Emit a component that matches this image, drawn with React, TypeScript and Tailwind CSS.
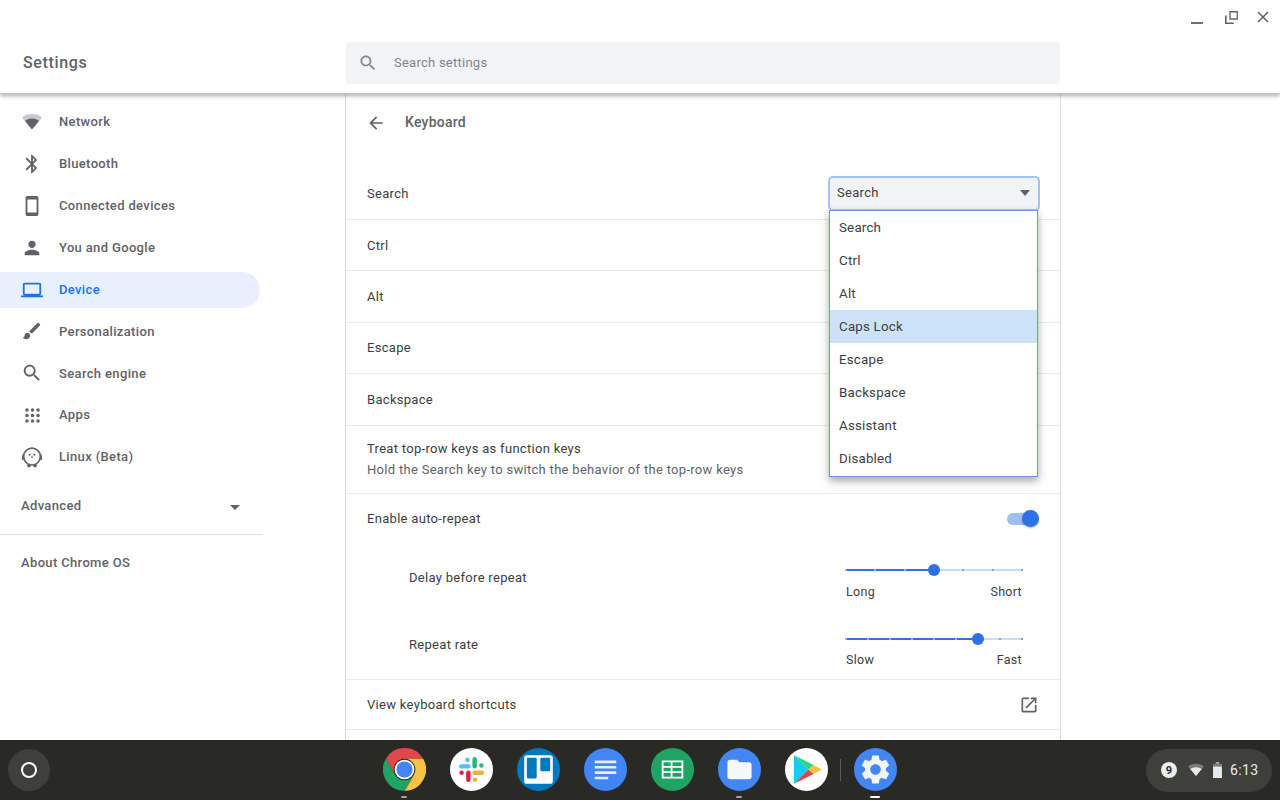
import type { ReactNode } from "react";

const ICON_PATHS = {
  bluetooth:
    "M17.71 7.71L12 2h-1v7.59L6.41 5 5 6.41 10.59 12 5 17.59 6.41 19 11 14.41V22h1l5.71-5.71-4.3-4.29 4.3-4.29zM13 5.83l1.88 1.88L13 9.59V5.83zm1.88 10.46L13 18.17v-3.76l1.88 1.88z",
  phone:
    "M17 1.01L7 1c-1.1 0-2 .9-2 2v18c0 1.1.9 2 2 2h10c1.1 0 2-.9 2-2V3c0-1.1-.9-1.99-2-1.99zM17 19H7V5h10v14z",
  person:
    "M12 12c2.21 0 4-1.79 4-4s-1.79-4-4-4-4 1.79-4 4 1.79 4 4 4zm0 2c-2.67 0-8 1.34-8 4v2h16v-2c0-2.66-5.33-4-8-4z",
  laptop:
    "M20 18c1.1 0 1.99-.9 1.99-2L22 6c0-1.1-.9-2-2-2H4c-1.1 0-2 .9-2 2v10c0 1.1.9 2 2 2H0v2h24v-2h-4zM4 6h16v10H4V6z",
  brush:
    "M7 14c-1.66 0-3 1.34-3 3 0 1.31-1.16 2-2 2 .92 1.22 2.49 2 4 2 2.21 0 4-1.79 4-4 0-1.66-1.34-3-3-3zm13.71-9.37l-1.34-1.34c-.39-.39-1.02-.39-1.41 0L9 12.25 11.75 15l8.96-8.96c.39-.39.39-1.02 0-1.41z",
  search:
    "M15.5 14h-.79l-.28-.27C15.41 12.59 16 11.11 16 9.5 16 5.91 13.09 3 9.5 3S3 5.91 3 9.5 5.91 16 9.5 16c1.61 0 3.09-.59 4.23-1.57l.27.28v.79l5 4.99L20.49 19l-4.99-5zm-6 0C7.01 14 5 11.99 5 9.5S7.01 5 9.5 5 14 7.01 14 9.5 11.99 14 9.5 14z",
  openNew:
    "M19 19H5V5h7V3H5c-1.11 0-2 .9-2 2v14c0 1.1.89 2 2 2h14c1.1 0 2-.9 2-2v-7h-2v7zM14 3v2h3.59l-9.83 9.83 1.41 1.41L19 6.41V10h2V3h-7z",
  back: "M20 11H7.83l5.59-5.59L12 4l-8 8 8 8 1.41-1.41L7.83 13H20v-2z",
  folder:
    "M10 4H4c-1.1 0-1.99.9-1.99 2L2 18c0 1.1.9 2 2 2h16c1.1 0 2-.9 2-2V8c0-1.1-.9-2-2-2h-8l-2-2z",
  gear: "M19.14 12.94c.04-.3.06-.61.06-.94 0-.32-.02-.64-.07-.94l2.03-1.58c.18-.14.23-.41.12-.61l-1.92-3.32c-.12-.22-.37-.29-.59-.22l-2.39.96c-.5-.38-1.03-.7-1.62-.94l-.36-2.54c-.04-.24-.24-.41-.48-.41h-3.84c-.24 0-.43.17-.47.41l-.36 2.54c-.59.24-1.13.57-1.62.94l-2.39-.96c-.22-.08-.47 0-.59.22L2.74 8.87c-.12.21-.08.47.12.61l2.03 1.58c-.05.3-.09.63-.09.94s.02.64.07.94l-2.03 1.58c-.18.14-.23.41-.12.61l1.92 3.32c.12.22.37.29.59.22l2.39-.96c.5.38 1.03.7 1.62.94l.36 2.54c.05.24.24.41.48.41h3.84c.24 0 .44-.17.47-.41l.36-2.54c.59-.24 1.13-.56 1.62-.94l2.39.96c.22.08.47 0 .59-.22l1.92-3.32c.12-.22.07-.47-.12-.61l-2.01-1.58zM12 15.6c-1.98 0-3.6-1.62-3.6-3.6s1.62-3.6 3.6-3.6 3.6 1.62 3.6 3.6-1.62 3.6-3.6 3.6z",
};

function Icon({ d, className }: { d: string; className?: string }) {
  return (
    <svg viewBox="0 0 24 24" fill="currentColor" className={className}>
      <path d={d} />
    </svg>
  );
}

function WifiIcon({ className }: { className?: string }) {
  return (
    <svg viewBox="0 0 24 24" fill="currentColor" className={className}>
      <path opacity="0.35" d="M12 21L24 6.5C23.5 6.1 18.9 2.5 12 2.5S.5 6.1 0 6.5z" />
      <path d="M12 21L20.6 10.6C19.6 9.8 16.4 7.8 12 7.8S4.4 9.8 3.4 10.6z" />
    </svg>
  );
}

function AppsIcon({ className }: { className?: string }) {
  return (
    <svg viewBox="0 0 24 24" fill="currentColor" className={className}>
      {[5, 12, 19].map((y) =>
        [5, 12, 19].map((x) => <circle key={`${x}-${y}`} cx={x} cy={y} r="2.2" />)
      )}
    </svg>
  );
}

function PenguinIcon({ className }: { className?: string }) {
  return (
    <svg viewBox="0 0 24 24" className={className}>
      <circle cx="12" cy="11.5" r="9.2" fill="none" stroke="currentColor" strokeWidth="1.8" />
      <path
        fill="currentColor"
        d="M3.5 7.5C1.2 9 .5 12 1 15c.8.4 1.8 0 2.5-.6zM20.5 7.5c2.3 1.5 3 4.5 2.5 7.5-.8.4-1.8 0-2.5-.6zM6 20.5h4.5v2.6H7.5zM13.5 20.5H18l-1.5 2.6h-3z"
      />
      <circle cx="9.3" cy="9.5" r="1.1" fill="currentColor" />
      <circle cx="14.7" cy="9.5" r="1.1" fill="currentColor" />
      <path fill="currentColor" d="M10.5 11.5h3L12 13.6z" />
    </svg>
  );
}

const navItems: { label: string; icon: ReactNode; active?: boolean }[] = [
  { label: "Network", icon: <WifiIcon className="w-[20px] h-[20px]" /> },
  { label: "Bluetooth", icon: <Icon d={ICON_PATHS.bluetooth} className="w-[22px] h-[22px]" /> },
  { label: "Connected devices", icon: <Icon d={ICON_PATHS.phone} className="w-[22px] h-[22px]" /> },
  { label: "You and Google", icon: <Icon d={ICON_PATHS.person} className="w-[22px] h-[22px]" /> },
  { label: "Device", icon: <Icon d={ICON_PATHS.laptop} className="w-[22px] h-[22px]" />, active: true },
  { label: "Personalization", icon: <Icon d={ICON_PATHS.brush} className="w-[22px] h-[22px]" /> },
  { label: "Search engine", icon: <Icon d={ICON_PATHS.search} className="w-[22px] h-[22px]" /> },
  { label: "Apps", icon: <AppsIcon className="w-[19px] h-[19px]" /> },
  { label: "Linux (Beta)", icon: <PenguinIcon className="w-[22px] h-[22px]" /> },
];

const menuOptions = ["Search", "Ctrl", "Alt", "Caps Lock", "Escape", "Backspace", "Assistant", "Disabled"];

function Sidebar() {
  return (
    <aside className="w-[345px] shrink-0 pt-[10px] text-[#5f6368]">
      <nav className="flex flex-col gap-[5.875px] w-[260px]">
        {navItems.map((item) => (
          <div
            key={item.label}
            className={`h-9 flex items-center rounded-r-[18px] ${
              item.active ? "bg-[#e8f0fe] text-[#1a73e8]" : ""
            }`}
          >
            <div className="w-[59px] pl-[20px] pr-[15px] flex items-center justify-center shrink-0">
              {item.icon}
            </div>
            <span className="text-[13px] font-medium tracking-[0.35px]">{item.label}</span>
          </div>
        ))}
      </nav>
      <div className="w-[263px] mt-[3px] h-[57px] flex items-center justify-between pl-[21px] pr-[23px] border-b border-[#e3e4e6] pb-[1px]">
        <span className="text-[13px] font-medium tracking-[0.35px]">Advanced</span>
        <span className="w-0 h-0 border-x-[5px] border-x-transparent border-t-[5px] border-t-[#5f6368] mt-[3px]" />
      </div>
      <p className="pl-[21px] mt-[18px] text-[13px] font-medium tracking-[0.35px]">About Chrome OS</p>
    </aside>
  );
}

function Slider({
  percent,
  steps,
  min,
  max,
  labelGap,
}: {
  percent: number;
  steps: number;
  min: string;
  max: string;
  labelGap: string;
}) {
  const ticks = Array.from({ length: steps + 1 }, (_, i) => (i * 100) / steps);
  return (
    <div className="w-[176px]">
      <div className="relative h-[2px] bg-[#c6dcf7]">
        <div className="h-full bg-[#2b72e6]" style={{ width: `${percent}%` }} />
        {ticks.map((t) => (
          <span
            key={t}
            className={`absolute top-0 w-[2px] h-[2px] -ml-[1px] ${t < percent ? "bg-[#8fb6f0]" : "bg-[#74a6ee]"}`}
            style={{ left: `${t}%` }}
          />
        ))}
        <span
          className="absolute top-[-5px] w-3 h-3 -ml-[6px] rounded-full bg-[#2b72e6]"
          style={{ left: `${percent}%` }}
        />
      </div>
      <div className={`flex justify-between ${labelGap} text-[12.5px] leading-4 text-[#3c4043]`}>
        <span>{min}</span>
        <span>{max}</span>
      </div>
    </div>
  );
}

function Row({ label, height }: { label: string; height: string }) {
  return (
    <div className={`${height} flex items-center px-[21px] border-b border-[#ebebeb] text-[13px] tracking-[0.3px] text-[#3c4043]`}>
      {label}
    </div>
  );
}

function KeyboardCard() {
  return (
    <main className="w-[716px] shrink-0 border-x border-[#dcdcdc] text-[#3c4043]">
      <div className="h-[57px] flex items-center pl-[20px]">
        <Icon d={ICON_PATHS.back} className="w-5 h-5 text-[#5f6368]" />
        <h2 className="ml-[19px] text-[14px] font-medium tracking-[0.25px] text-[#5f6368]">Keyboard</h2>
      </div>
      <div className="h-[69px] pt-[16px] flex items-center justify-between pl-[21px] pr-[20px] border-b border-[#ebebeb] text-[13px] tracking-[0.3px]">
        <span className="pt-[1px]">Search</span>
        <div className="relative z-10">
          <div className="w-[212px] h-[35px] flex items-center justify-between rounded-[5px] border-2 border-[#a3c3f7] bg-[#f1f3f4] pl-[7px] pr-[8px]">
            <span>Search</span>
            <span className="w-0 h-0 border-x-[5px] border-x-transparent border-t-[6px] border-t-[#5f6368]" />
          </div>
          <ul className="absolute left-[1px] top-[34px] w-[209px] border border-[#6f97dc] bg-white pb-[1px] text-[13.33px] tracking-[0.2px] shadow-[0_4px_8px_rgba(0,0,0,0.35)]">
            {menuOptions.map((option) => (
              <li
                key={option}
                className={`h-[33px] flex items-center pl-[9px] pt-[2px] ${option === "Caps Lock" ? "bg-[#cce2f8]" : ""}`}
              >
                {option}
              </li>
            ))}
          </ul>
        </div>
      </div>
      <Row label="Ctrl" height="h-[51px] pt-[1px]" />
      <Row label="Alt" height="h-[52px]" />
      <Row label="Escape" height="h-[51px]" />
      <Row label="Backspace" height="h-[52px]" />
      <div className="h-[68px] flex flex-col justify-center px-[21px] pb-[2px] border-b border-[#ebebeb] text-[13px] tracking-[0.3px]">
        <p className="leading-[21px]">Treat top-row keys as function keys</p>
        <p className="leading-[21px] text-[#5f6368]">Hold the Search key to switch the behavior of the top-row keys</p>
      </div>
      <div className="h-[186px] border-b border-[#ebebeb] text-[13px] tracking-[0.3px]">
        <div className="h-[50px] flex items-center justify-between pl-[21px] pr-[21px]">
          <span>Enable auto-repeat</span>
          <div className="relative w-[32px] h-3 rounded-full bg-[#9dbff3]">
            <span className="absolute right-0 top-[-3px] w-[17px] h-[17px] rounded-full bg-[#2b72e6] shadow-[0_1px_2px_rgba(0,0,0,0.3)]" />
          </div>
        </div>
        <div className="h-[66px] pt-[19px] flex justify-between pl-[63px] pr-[38px]">
          <span className="mt-[5px]">Delay before repeat</span>
          <div className="pt-[6px]">
            <Slider percent={50} steps={6} min="Long" max="Short" labelGap="mt-[13px]" />
          </div>
        </div>
        <div className="h-[68px] pt-[20px] flex justify-between pl-[63px] pr-[38px]">
          <span className="mt-[5px]">Repeat rate</span>
          <div className="pt-[8px]">
            <Slider percent={75} steps={8} min="Slow" max="Fast" labelGap="mt-[12px]" />
          </div>
        </div>
      </div>
      <div className="h-[50px] flex items-center justify-between pl-[21px] pr-[21px] border-b border-[#ebebeb] text-[13px] tracking-[0.3px]">
        <span>View keyboard shortcuts</span>
        <Icon d={ICON_PATHS.openNew} className="w-5 h-5 text-[#5f6368]" />
      </div>
    </main>
  );
}

function ChromeLogo() {
  return (
    <svg viewBox="0 0 48 48" className="w-[43px] h-[43px]">
      <path fill="#e0474c" d="M3.2 12A24 24 0 0 1 44.8 12H24a12 12 0 0 0-10.4 18z" />
      <path fill="#f6c344" d="M44.8 12A24 24 0 0 1 24 48L34.4 30A12 12 0 0 0 24 12z" />
      <path fill="#1fa463" d="M24 48A24 24 0 0 1 3.2 12L13.6 30A12 12 0 0 0 34.4 30z" />
      <circle cx="24" cy="24" r="11" fill="#fff" />
      <circle cx="24" cy="24" r="9" fill="#4285f4" />
    </svg>
  );
}

function SlackLogo() {
  return (
    <svg viewBox="0 0 48 48" className="w-[43px] h-[43px]">
      <circle cx="24" cy="24" r="24" fill="#fff" />
      <g strokeLinecap="round" strokeWidth="5" fill="none">
        <path stroke="#4fc3f0" d="M12.5 20.5h8" />
        <path stroke="#4fc3f0" d="M19.5 13h.01" />
        <path stroke="#2eb67d" d="M27.5 12.5v8" />
        <path stroke="#2eb67d" d="M35 19.5v.01" />
        <path stroke="#e01e5a" d="M20.5 27.5v8" />
        <path stroke="#e01e5a" d="M13 27.5v.01" />
        <path stroke="#ecb22e" d="M27.5 27.5h8" />
        <path stroke="#ecb22e" d="M28 35.5v.01" />
      </g>
    </svg>
  );
}

function TrelloLogo() {
  return (
    <svg viewBox="0 0 48 48" className="w-[43px] h-[43px]">
      <circle cx="24" cy="24" r="24" fill="#0079bf" />
      <rect x="8" y="8" width="32" height="32" rx="3" fill="#fff" />
      <rect x="11" y="11" width="11" height="23" rx="1.5" fill="#0079bf" />
      <rect x="26" y="11" width="11" height="15" rx="1.5" fill="#0079bf" />
    </svg>
  );
}

function DocsLogo() {
  return (
    <svg viewBox="0 0 48 48" className="w-[43px] h-[43px]">
      <circle cx="24" cy="24" r="24" fill="#4285f4" />
      <path fill="#e8eefc" d="M12 14h24v3H12zM12 20h24v3H12zM12 26h24v3H12zM12 32h15v3H12z" />
    </svg>
  );
}

function SheetsLogo() {
  return (
    <svg viewBox="0 0 48 48" className="w-[43px] h-[43px]">
      <circle cx="24" cy="24" r="24" fill="#1fa463" />
      <path
        fill="#fff"
        fillRule="evenodd"
        d="M12 14h24v20H12zM14 16v4h8v-4zM24 16v4h10v-4zM14 22v4h8v-4zM24 22v4h10v-4zM14 28v4h8v-4zM24 28v4h10v-4z"
      />
    </svg>
  );
}

function FilesLogo() {
  return (
    <div className="w-[43px] h-[43px] rounded-full bg-[#4285f4] flex items-center justify-center">
      <Icon d={ICON_PATHS.folder} className="w-[29px] h-[29px] text-[#f5f7fb]" />
    </div>
  );
}

function PlayLogo() {
  return (
    <svg viewBox="0 0 48 48" className="w-[43px] h-[43px]">
      <circle cx="24" cy="24" r="24" fill="#fff" />
      <path fill="#1ec8f5" d="M10 8v32l16-16z" />
      <path fill="#21d97e" d="M10 8l22 11-6 5z" />
      <path fill="#e2424e" d="M10 40l22-11-6-5z" />
      <path fill="#f8c23a" d="M32 19l9 5-9 5-6-5z" />
    </svg>
  );
}

function SettingsLogo() {
  return (
    <div className="w-[43px] h-[43px] rounded-full bg-[#4285f4] flex items-center justify-center">
      <Icon d={ICON_PATHS.gear} className="w-[35px] h-[35px] text-[#f1f4fb]" />
    </div>
  );
}

function ShelfApp({ children, dot }: { children: ReactNode; dot?: "open" | "active" }) {
  return (
    <div className="relative w-[43px] h-[43px]">
      {children}
      {dot === "open" && (
        <span className="absolute left-[18px] top-[48px] w-[6px] h-[2px] rounded-full bg-[#9aa0a6]" />
      )}
      {dot === "active" && (
        <span className="absolute left-[16px] top-[48px] w-[10px] h-[2px] rounded-full bg-white" />
      )}
    </div>
  );
}

function Shelf() {
  return (
    <footer className="h-[60px] shrink-0 bg-[#292a26] flex items-center justify-between pl-2 pr-2">
      <div className="w-[42px] h-[42px] rounded-full bg-[#3f403c] flex items-center justify-center">
        <span className="w-[16px] h-[16px] rounded-full border-2 border-white" />
      </div>
      <div className="flex items-center ml-[83px] mb-[1px]">
        <div className="flex items-center gap-[24px]">
          <ShelfApp dot="open"><ChromeLogo /></ShelfApp>
          <ShelfApp><SlackLogo /></ShelfApp>
          <ShelfApp><TrelloLogo /></ShelfApp>
          <ShelfApp><DocsLogo /></ShelfApp>
          <ShelfApp><SheetsLogo /></ShelfApp>
          <ShelfApp dot="open"><FilesLogo /></ShelfApp>
          <ShelfApp><PlayLogo /></ShelfApp>
        </div>
        <span className="w-px h-[22px] mx-[12.5px] bg-[#5b5c58]" />
        <ShelfApp dot="active"><SettingsLogo /></ShelfApp>
      </div>
      <div className="w-[126px] h-[43px] rounded-full bg-[#3f403c] flex items-center pl-[15px] text-[#e8eaed]">
        <span className="w-4 h-4 rounded-full bg-[#eceded] flex items-center justify-center text-[11px] font-bold leading-none text-[#292a26]">
          9
        </span>
        <WifiIcon className="w-4 h-4 ml-[11px]" />
        <svg viewBox="0 0 10 18" className="w-[9px] h-[16px] ml-[9px]" fill="currentColor">
          <path d="M3 0h4v2H3z" opacity="0.6" />
          <path d="M0 5h10v13H0z" />
          <path d="M0 2h10v3H0z" opacity="0.35" />
        </svg>
        <span className="ml-[8px] pt-[1px] text-[14px] tracking-[0.4px]">6:13</span>
      </div>
    </footer>
  );
}

export default function App() {
  return (
    <div
      className="w-[1280px] h-[800px] flex flex-col overflow-hidden bg-white antialiased"
      style={{ fontFamily: "Roboto, sans-serif" }}
    >
      <header className="relative z-20 h-[94px] shrink-0 bg-white border-b border-[#c4c4c4] shadow-[0_2px_4px_rgba(0,0,0,0.3)]">
        <div className="h-8 flex items-center justify-end text-[#5f6368]">
          <span className="w-[12px] h-[2px] bg-[#6b6f73] mt-[13px] mr-[22px]" />
          <svg viewBox="0 0 13 13" className="w-[13px] h-[13px] mr-[19px] mt-[2px]" fill="none" stroke="currentColor">
            <path d="M5 .75h7.25V8H5z" strokeWidth="1.3" />
            <path d="M.8 4.5v7.7h8" strokeWidth="1.6" />
          </svg>
          <svg viewBox="0 0 12 12" className="w-[12px] h-[12px] mr-[11px] mt-[2px]" fill="none" stroke="currentColor" strokeWidth="1.5">
            <path d="M1 1l10 10M11 1L1 11" />
          </svg>
        </div>
        <div className="flex items-start">
          <h1 className="w-[346px] pl-[23px] pt-[21px] text-[16px] font-medium tracking-[0.65px] leading-5 text-[#5f6368]">
            Settings
          </h1>
          <div className="w-[714px] h-[42px] mt-[10px] rounded-[4px] bg-[#f1f3f4] flex items-center pl-[12px] text-[13px] tracking-[0.25px] text-[#80868b]">
            <Icon d={ICON_PATHS.search} className="w-5 h-5 text-[#80868b]" />
            <span className="ml-[16px]">Search settings</span>
          </div>
        </div>
      </header>
      <div className="flex-1 min-h-0 flex overflow-hidden">
        <Sidebar />
        <KeyboardCard />
      </div>
      <Shelf />
    </div>
  );
}
